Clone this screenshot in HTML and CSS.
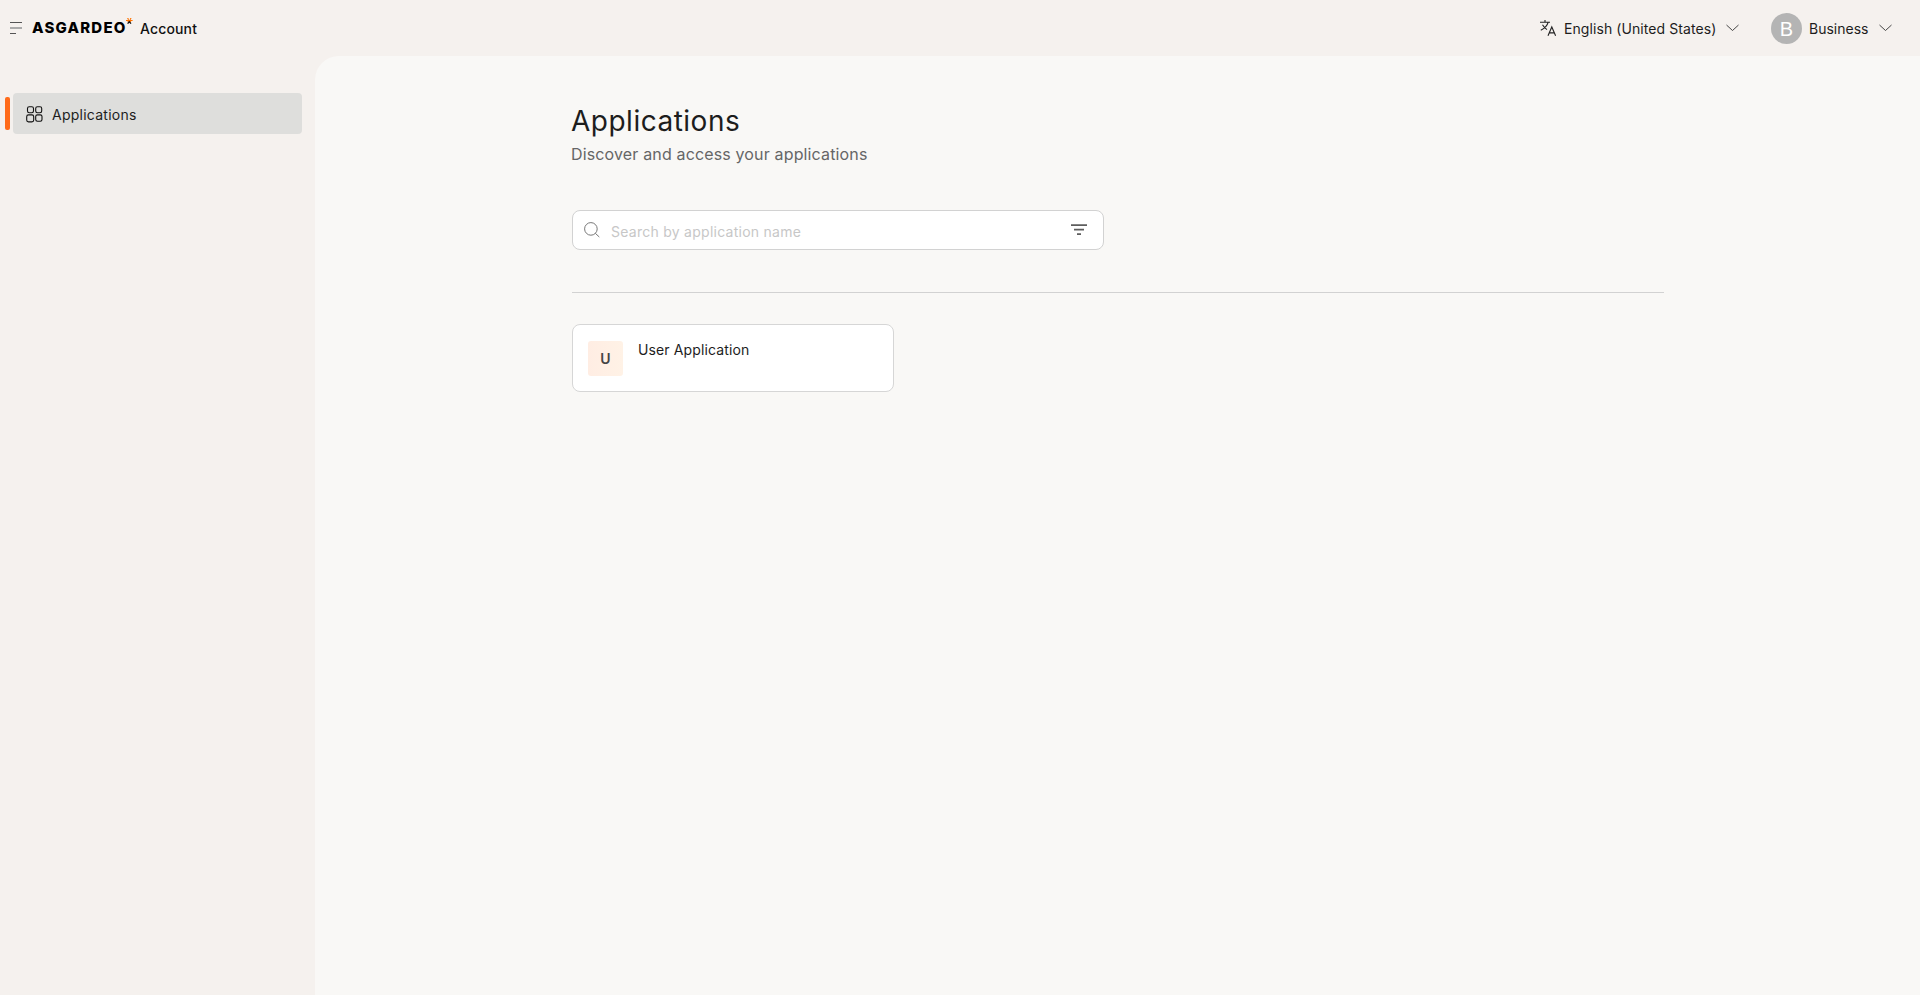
FILE: index.html
```html
<!DOCTYPE html>
<html lang="en">
<head>
<meta charset="utf-8">
<title>Account | Applications</title>
<link rel="stylesheet" href="styles.css">
</head>
<body>
<header class="header">
  <svg class="menu-icon" width="12" height="13" viewBox="0 0 12 13"><path d="M0 .5h12M0 11.5h6"/><path class="menu-middle" d="M0 6h12"/></svg>
  <div class="brand">
    <span class="logo">ASGARDEO</span>
    <svg class="spark" width="7" height="7" viewBox="0 0 7 7"><path class="spark-top" d="M1.6 0 2.6 1.8M5 0 4.1 1.8M0 2.5h6.6M1.8 4 3.3 2.5 4.8 4"/><path class="spark-base" d="M1.6 5.6 3.3 3.8 5 5.6"/></svg>
    <span class="product">Account</span>
  </div>
  <div class="language">
    <svg class="translate" width="18" height="17" viewBox="0 0 18 17"><path d="M0 2.2h10M5 0v2.2M8.2 2.2C7.2 6 4.2 8.7.8 10.2M2.5 4.8C4 7.4 5.5 8.7 7 9.6M8 15.8 11.8 7l3.8 8.8M9.3 12.9h5"/></svg>
    <span class="language-name">English (United States)</span>
    <svg class="chevron" width="13" height="8" viewBox="0 0 13 8"><path d="M.5 1l6 5.5 6-5.5"/></svg>
  </div>
  <div class="user">
    <span class="avatar">B</span>
    <span class="user-name">Business</span>
    <svg class="chevron" width="13" height="8" viewBox="0 0 13 8"><path d="M.5 1l6 5.5 6-5.5"/></svg>
  </div>
</header>
<div class="layout">
  <nav class="sidebar">
    <div class="marker"></div>
    <a class="nav-item">
      <svg class="grid-icon" width="17" height="17" viewBox="0 0 17 17"><rect x="1.5" y=".7" width="6" height="6" rx="1.7"/><rect x="9.7" y=".7" width="6" height="6" rx="1.7"/><rect x=".7" y="8.9" width="7" height="7" rx="1.8"/><rect x="9.7" y="8.9" width="6.3" height="6.3" rx="1.7"/></svg>
      <span class="nav-label">Applications</span>
    </a>
  </nav>
  <main class="content">
    <h1 class="title">Applications</h1>
    <p class="subtitle">Discover and access your applications</p>
    <div class="search">
      <svg class="search-icon" width="16" height="16" viewBox="0 0 16 16"><circle cx="6.9" cy="6.9" r="6.3"/><path d="M11.3 11.3 15.3 15"/></svg>
      <span class="placeholder">Search by application name</span>
      <svg class="filter" width="16" height="12" viewBox="0 0 16 12"><path d="M0 1.1h16M3 5.7h10M6 10.2h4"/></svg>
    </div>
    <hr class="divider">
    <section class="card">
      <div class="app-icon">U</div>
      <div class="app-name">User Application</div>
    </section>
  </main>
</div>
</body>
</html>
```

FILE: styles.css
```css
* { box-sizing: border-box; }
body { margin: 0; height: 995px; overflow: hidden; display: flex; flex-direction: column; background: #f5f1ee; color: #1d1d1d; font: 14px/20px Inter, "Liberation Sans", sans-serif; }
svg { fill: none; flex: none; }
span { white-space: nowrap; }
.header { display: flex; height: 56px; align-items: center; padding: 0 28px 0 10px; }
.menu-icon { stroke: #555; }
.menu-middle { stroke: #aaa; stroke-width: 2; }
.brand { display: flex; margin-left: 10px; align-items: center; }
.logo { width: 94px; color: #000; font-size: 15px; font-weight: 800; letter-spacing: 1.2px; }
.spark { margin-top: -13px; }
.spark-top { stroke: #ff7300; stroke-width: 1.2; }
.spark-base { stroke: #111; stroke-width: 1.3; }
.product { margin-left: 7px; padding-top: 2px; color: #111; font-weight: 500; letter-spacing: 0.15px; }
.language { display: flex; align-items: center; margin-left: auto; }
.translate { stroke: #222; stroke-width: 1.1; }
.language-name { width: 152px; margin: 2px 10px 0 6px; letter-spacing: 0.08px; }
.chevron { stroke: #333; stroke-width: 0.9; }
.user { display: flex; align-items: center; margin-left: 32px; }
.avatar { width: 31px; height: 31px; border-radius: 50%; background: #b4b4b4; color: #fff; font: 20px/32px "Liberation Sans", sans-serif; text-align: center; }
.user-name { width: 60px; margin: 2px 10px 0 7px; }
.layout { display: flex; flex: 1; }
.sidebar { display: flex; width: 315px; padding: 37px 13px 0 5px; gap: 3px; }
.marker { width: 5px; height: 33px; margin-top: 4px; border-radius: 2px; background: #ff6b1a; }
.nav-item { display: flex; flex: 1; height: 41px; padding-left: 13px; align-items: center; border-radius: 4px; background: #dededc; }
.grid-icon { margin-top: 1px; stroke: #111; stroke-width: 1.1; }
.nav-label { margin-left: 9px; padding-top: 2px; letter-spacing: 0.25px; }
.content { flex: 1; padding: 44px 256px 0 257px; border-radius: 24px 0 0; background: #f9f8f6; }
.title { margin: 0 0 0 -1px; font-size: 28px; line-height: 42px; font-weight: 400; letter-spacing: 0.5px; }
.subtitle { margin: 0 0 0 -1px; color: #666; font-size: 16px; line-height: 24px; letter-spacing: 0.15px; }
.search { display: flex; width: 532px; height: 40px; margin-top: 44px; padding: 0 16px 0 11px; align-items: center; border: 1px solid #d2d2d2; border-radius: 8px; background: #fff; }
.search-icon { stroke: #777; }
.placeholder { flex: 1; margin-left: 11px; padding-top: 3px; color: #c7c7c7; letter-spacing: 0.26px; }
.filter { stroke: #5e5e5e; stroke-width: 1.7; }
.divider { height: 1px; margin: 42px 0 31px; border: 0; background: #d2d2d2; }
.card { display: flex; width: 322px; height: 68px; padding: 16px 15px; gap: 15px; border: 1px solid #d6d6d6; border-radius: 8px; background: #fff; }
.app-icon { width: 35px; height: 35px; border-radius: 3px; background: linear-gradient(90deg, #ffede3, #fff2e6); color: #444; font-size: 14px; font-weight: 600; line-height: 36px; text-align: center; }
.app-name { line-height: 18px; letter-spacing: 0.12px; }
```
